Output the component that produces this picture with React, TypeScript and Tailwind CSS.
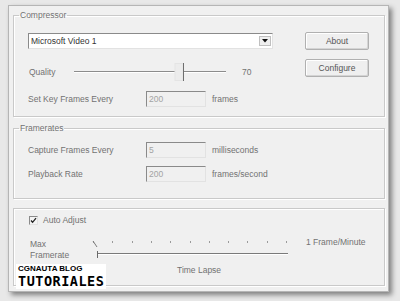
import React from 'react';

const sunken = 'border border-t-[#8a8a8a] border-l-[#8a8a8a] border-b-[#e2e2e2] border-r-[#e2e2e2]';
const groupBox = 'border border-[#c9c9c9] shadow-[1px_1px_0_#ffffff,inset_1px_1px_0_#ffffff]';

function DisabledInput({ value }: { value: string }) {
  return (
    <div className={`w-[60px] h-[16px] bg-[#f0f0f0] ${sunken} pl-[2px] leading-[14px] text-[#a3a3a3]`}>{value}</div>
  );
}

function Button({ label }: { label: string }) {
  return (
    <div className="w-[64px] h-[18px] rounded-[2px] border border-[#b0b0b0] bg-[#efefef] shadow-[inset_-1px_-1px_0_#d4d4d4,inset_1px_1px_0_#ffffff] flex items-center justify-center text-[#555555]">
      {label}
    </div>
  );
}

function QualitySlider() {
  return (
    <svg width="160" height="18" viewBox="0 0 160 18" className="block">
      <line x1="4" y1="8.5" x2="156" y2="8.5" stroke="#8c8c8c" strokeWidth="1" />
      <line x1="4" y1="9.5" x2="156" y2="9.5" stroke="#ffffff" strokeWidth="1" />
      <rect x="105" y="0.5" width="8" height="17" fill="#ececec" stroke="#e4e4e4" />
      <line x1="113.5" y1="0" x2="113.5" y2="18" stroke="#6e6e6e" strokeWidth="1" />
    </svg>
  );
}

function FramerateSlider() {
  const ticks = Array.from({ length: 11 }, (_, i) => 3 + i * 19.3);
  return (
    <svg width="202" height="20" viewBox="0 0 202 20" className="block">
      {ticks.map(x => (
        <line key={x} x1={Math.round(x) + 0.5} y1="2" x2={Math.round(x) + 0.5} y2="4" stroke="#9a9a9a" />
      ))}
      <line x1="7" y1="14.5" x2="198" y2="14.5" stroke="#7a7a7a" />
      <line x1="7" y1="15.5" x2="198" y2="15.5" stroke="#ffffff" />
      <line x1="3" y1="2" x2="7" y2="8" stroke="#7a7a7a" />
      <line x1="7.5" y1="12" x2="7.5" y2="19" stroke="#6a6a6a" />
    </svg>
  );
}

export default function App() {
  return (
    <div className="w-[400px] h-[301px] overflow-hidden bg-[#e8e8e8] pt-[5px] pl-[8px] font-['Liberation_Sans',Arial,sans-serif] text-[8.5px] leading-[11px] text-[#727272]">
      <div className="relative w-[381px] h-[287px] bg-[#f0f0f0] border border-[#b5b5b5] shadow-[3px_3px_5px_rgba(0,0,0,0.45)] pl-[4px]">
        {/* Compressor */}
        <fieldset className={`mt-[3px] w-[372px] h-[108px] ${groupBox}`}>
          <legend className="ml-[5px] px-[1px] leading-[12px]">Compressor</legend>
          <div className="flex pl-[14px]">
            <div className="w-[245px] pt-[12px]">
              <div className={`h-[16px] bg-white ${sunken} flex items-center justify-between pl-[2px] pr-[1px] text-[#333333]`}>
                <span>Microsoft Video 1</span>
                <div className="w-[12px] h-[10px] bg-[#efefef] border border-[#c0c0c0] flex items-center justify-center">
                  <svg width="6" height="4" viewBox="0 0 6 4">
                    <path d="M0 0h6L3 3.5z" fill="#111111" />
                  </svg>
                </div>
              </div>
              <div className="mt-[14px] h-[18px] flex items-center">
                <span className="w-[42px] pl-[1px]">Quality</span>
                <QualitySlider />
                <span className="ml-[12px]">70</span>
              </div>
              <div className="mt-[10px] flex items-center">
                <span className="w-[118px]">Set Key Frames Every</span>
                <DisabledInput value="200" />
                <span className="ml-[6px]">frames</span>
              </div>
            </div>
            <div className="ml-[32px] pt-[11px] flex flex-col gap-[9px]">
              <Button label="About" />
              <Button label="Configure" />
            </div>
          </div>
        </fieldset>

        {/* Framerates */}
        <fieldset className={`mt-[5px] w-[372px] h-[77px] ${groupBox}`}>
          <legend className="ml-[5px] px-[1px] leading-[12px]">Framerates</legend>
          <div className="pl-[14px] pt-[8px] flex flex-col gap-[8px]">
            <div className="flex items-center">
              <span className="w-[118px]">Capture Frames Every</span>
              <DisabledInput value="5" />
              <span className="ml-[6px]">milliseconds</span>
            </div>
            <div className="flex items-center">
              <span className="w-[118px]">Playback Rate</span>
              <DisabledInput value="200" />
              <span className="ml-[6px]">frames/second</span>
            </div>
          </div>
        </fieldset>

        {/* Auto adjust */}
        <div className={`mt-[9px] w-[372px] h-[78px] ${groupBox} pl-[15px] pt-[7px]`}>
          <div className="flex items-center h-[9px]">
            <div className={`w-[9px] h-[9px] bg-[#f4f4f4] ${sunken} flex items-center justify-center`}>
              <svg width="7" height="7" viewBox="0 0 7 7">
                <path d="M1 3.5l1.6 1.8L6 1.2" fill="none" stroke="#222222" strokeWidth="1.3" />
              </svg>
            </div>
            <span className="ml-[5px]">Auto Adjust</span>
          </div>
          <div className="mt-[14px] flex items-start">
            <div className="w-[61px] pl-[1px]">
              <div>Max</div>
              <div>Framerate</div>
            </div>
            <FramerateSlider />
            <span className="ml-[14px] mt-[-2px]">1 Frame/Minute</span>
          </div>
          <div className="mt-[4px] pl-[148px]">Time Lapse</div>
        </div>

        {/* watermark */}
        <div className="absolute left-[7px] bottom-[2px] bg-white px-[2px]">
          <div className="font-bold text-[8px] leading-[10px] text-black">CGNAUTA BLOG</div>
          <div className="font-['DejaVu_Sans_Mono',monospace] font-black text-[13.5px] leading-[15px] text-black tracking-[0.5px]">TUTORIALES</div>
        </div>
      </div>
    </div>
  );
}
